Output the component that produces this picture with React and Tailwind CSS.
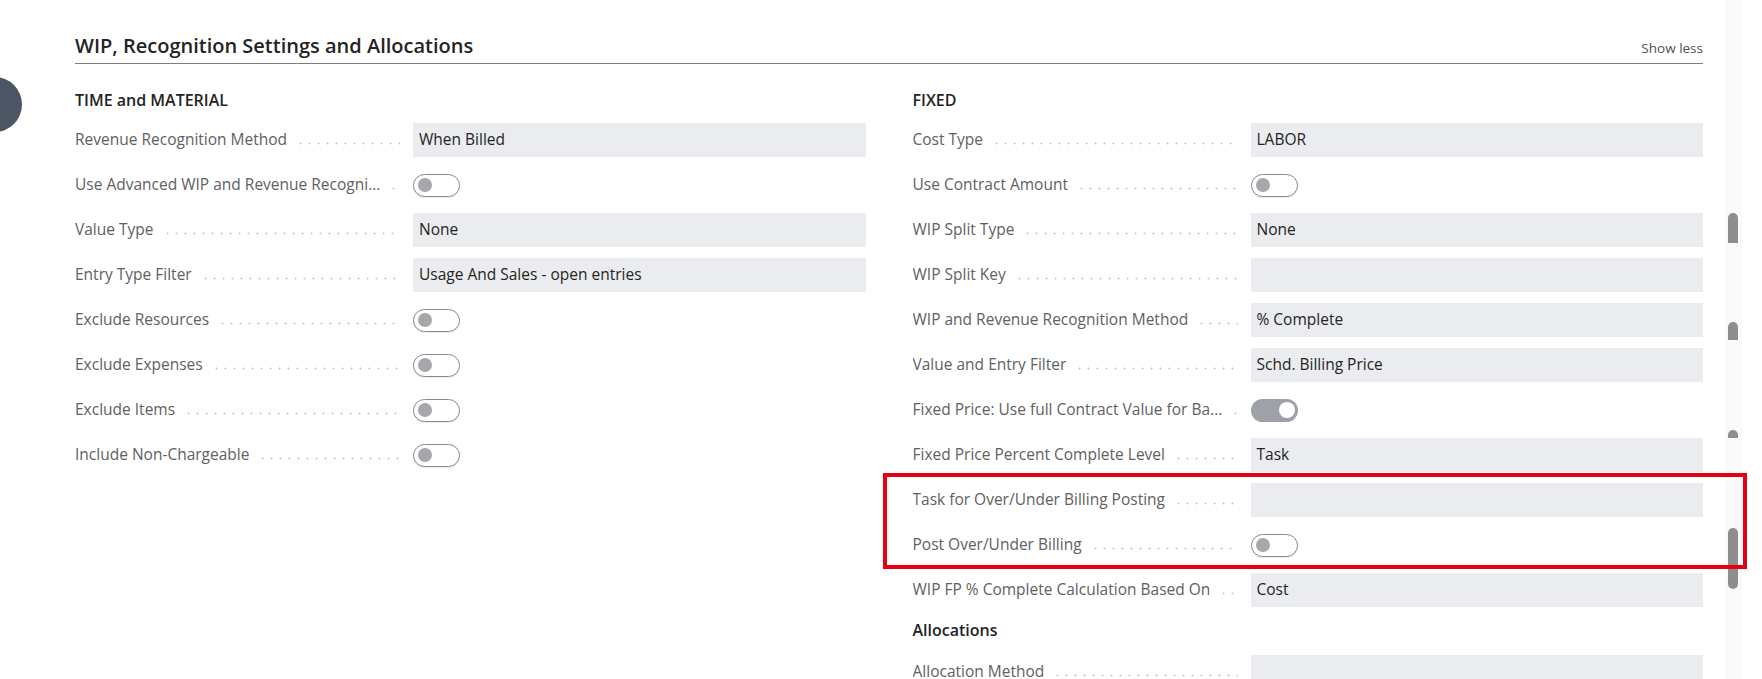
import React from 'react';

const leftRows = [
  { label: 'Revenue Recognition Method', value: 'When Billed' },
  { label: 'Use Advanced WIP and Revenue Recogni...', toggle: 'off' },
  { label: 'Value Type', value: 'None' },
  { label: 'Entry Type Filter', value: 'Usage And Sales - open entries' },
  { label: 'Exclude Resources', toggle: 'off' },
  { label: 'Exclude Expenses', toggle: 'off' },
  { label: 'Exclude Items', toggle: 'off' },
  { label: 'Include Non-Chargeable', toggle: 'off' },
];

const rightRows = [
  { label: 'Cost Type', value: 'LABOR' },
  { label: 'Use Contract Amount', toggle: 'off' },
  { label: 'WIP Split Type', value: 'None' },
  { label: 'WIP Split Key', value: '' },
  { label: 'WIP and Revenue Recognition Method', value: '% Complete' },
  { label: 'Value and Entry Filter', value: 'Schd. Billing Price' },
  { label: 'Fixed Price: Use full Contract Value for Ba...', toggle: 'on' },
  { label: 'Fixed Price Percent Complete Level', value: 'Task' },
  { label: 'Task for Over/Under Billing Posting', value: '' },
  { label: 'Post Over/Under Billing', toggle: 'off' },
  { label: 'WIP FP % Complete Calculation Based On', value: 'Cost' },
];

const Toggle = ({ on }) =>
  on ? (
    <div className="w-[47px] h-[23px] rounded-full bg-[#9fa1a8] flex items-center justify-end pr-[3px]">
      <div className="w-[16px] h-[16px] rounded-full bg-white" />
    </div>
  ) : (
    <div className="w-[47px] h-[23px] rounded-full border border-[#8a8a8e] bg-white flex items-center pl-[4px] shadow-[0_1px_1px_rgba(0,0,0,0.08)]">
      <div className="w-[14px] h-[14px] rounded-full bg-[#a6a7ad]" />
    </div>
  );

const Row = ({ row }) => (
  <div className="grid grid-cols-[338px_1fr] h-[34px] mb-[11px]">
    <div className="flex items-center pr-[13px] min-w-0">
      <span className="truncate text-[15.5px] text-[#616161]">{row.label}</span>
      <span className="flex-1 min-w-[6px] ml-[9px] mt-[7px] h-[3px] bg-[radial-gradient(circle,#c6c6c6_0.8px,transparent_1.2px)] bg-[length:9px_3px] bg-repeat-x bg-left" />
    </div>
    {row.toggle ? (
      <div className="flex items-center">
        <Toggle on={row.toggle === 'on'} />
      </div>
    ) : (
      <div className="bg-[#ebecef] flex items-center px-[6px] text-[15.5px] text-[#242424] whitespace-nowrap overflow-hidden">
        {row.value}
      </div>
    )}
  </div>
);

const GroupTitle = ({ children, className = '' }) => (
  <div className={`h-[24px] flex items-center text-[16px] font-semibold text-[#242424] ${className}`}>{children}</div>
);

const App = () => {
  return (
    <div className="relative w-full h-[679px] overflow-hidden bg-white font-['Open_Sans',sans-serif]">
      {/* left nav bubble */}
      <div className="absolute left-[-33px] top-[77px] w-[55px] h-[55px] rounded-full bg-[#4b5563]" />

      {/* scrollbar track + ghost thumbs */}
      <div className="absolute left-[1725px] top-0 w-[17px] h-full bg-[#fafafb]" />
      <div className="absolute left-[1728px] top-[213px] w-[10px] h-[30px] rounded-t-full bg-[#8e8e8e]" />
      <div className="absolute left-[1728px] top-[322px] w-[10px] h-[18px] rounded-t-full bg-[#8e8e8e]" />
      <div className="absolute left-[1728px] top-[430px] w-[10px] h-[8px] rounded-t-full bg-[#8e8e8e]" />
      <div className="absolute left-[1728px] top-[528px] w-[10px] h-[61px] rounded-full bg-[#8e8e8e]" />

      <div className="relative pl-[75px] pr-[59px] pt-[32px]">
        <div className="flex items-end justify-between border-b border-[#7d7d7d] pb-[3px]">
          <h2 className="text-[20px] leading-[28px] font-semibold text-[#242424]">WIP, Recognition Settings and Allocations</h2>
          <button className="text-[13.5px] leading-[20px] text-[#505050] mb-[2px]">Show less</button>
        </div>

        <div className="grid grid-cols-2 gap-x-[47px] mt-[24px]">
          <div>
            <GroupTitle className="mb-[11px]">TIME and MATERIAL</GroupTitle>
            {leftRows.map((r) => (
              <Row key={r.label} row={r} />
            ))}
          </div>
          <div>
            <GroupTitle className="mb-[11px]">FIXED</GroupTitle>
            {rightRows.map((r) => (
              <Row key={r.label} row={r} />
            ))}
            <GroupTitle className="mt-[4px] mb-[13px]">Allocations</GroupTitle>
            <Row row={{ label: 'Allocation Method', value: '' }} />
          </div>
        </div>
      </div>

      {/* highlight box */}
      <div className="absolute left-[883px] top-[473px] w-[864px] h-[96px] border-[4px] border-[#e60012]" />
    </div>
  );
};

export default App;
